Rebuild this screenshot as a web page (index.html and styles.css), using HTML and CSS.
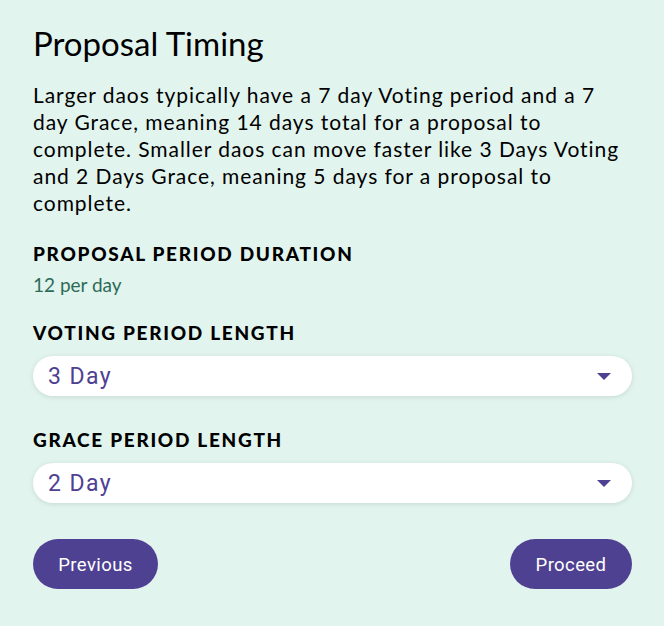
FILE: index.html
```html
<!DOCTYPE html>
<html>
<head>
<meta charset="utf-8">
<link rel="stylesheet" href="styles.css">
</head>
<body>
<div class="page">
  <h1 class="title">Proposal Timing</h1>
  <p class="desc">Larger daos typically have a 7 day Voting period and a 7 day Grace, meaning 14 days total for a proposal to complete. Smaller daos can move faster like 3 Days Voting and 2 Days Grace, meaning 5 days for a proposal to complete.</p>
  <div class="field first">
    <div class="label">Proposal Period Duration</div>
    <div class="value">12 per day</div>
  </div>
  <div class="field second">
    <div class="label">Voting Period Length</div>
    <div class="select"><span>3 Day</span><svg class="caret" width="14" height="7" viewBox="0 0 14 7"><path d="M0 0h14L7 7z" fill="#4f4192"/></svg></div>
  </div>
  <div class="field third">
    <div class="label">Grace Period Length</div>
    <div class="select"><span>2 Day</span><svg class="caret" width="14" height="7" viewBox="0 0 14 7"><path d="M0 0h14L7 7z" fill="#4f4192"/></svg></div>
  </div>
  <div class="actions">
    <button class="btn prev">Previous</button>
    <button class="btn next">Proceed</button>
  </div>
</div>
</body>
</html>
```
FILE: styles.css
```css
html, body { margin: 0; padding: 0; }
body { background: #e2f4ee; width: 664px; height: 626px; overflow: hidden; }
.page { padding: 23px 32px 0 33px; font-family: "Lato", sans-serif; color: #000; }
.title { margin: 0; font-size: 33px; font-weight: 400; line-height: 40px; }
.desc { margin: 18px 0 0; font-size: 21px; line-height: 27px; letter-spacing: 0.95px; }
.field.first { margin-top: 26px; }
.field.second { margin-top: 24px; }
.field.third { margin-top: 32px; }
.label { font-size: 19px; font-weight: 900; letter-spacing: 1.7px; text-transform: uppercase; line-height: 24px; }
.value { font-size: 19px; color: #2d6b57; margin-top: 7px; line-height: 24px; }
.select { margin-top: 11px; height: 40px; background: #fff; border-radius: 20px; box-shadow: 0 1px 5px rgba(60,100,90,0.18); display: flex; align-items: center; justify-content: space-between; padding: 0 21px 0 15px; font-family: "Roboto", sans-serif; font-size: 23px; letter-spacing: 1.4px; color: #4f4192; }
.caret { display: block; margin-top: 1px; }
.actions { display: flex; justify-content: space-between; margin-top: 36px; }
.btn { height: 50px; border: 0; border-radius: 25px; background: #4f4192; color: #fff; font-family: "Roboto", sans-serif; font-size: 18.5px; letter-spacing: 0.4px; padding: 1px 0 0; }
.prev { width: 125px; }
.next { width: 122px; }
```
